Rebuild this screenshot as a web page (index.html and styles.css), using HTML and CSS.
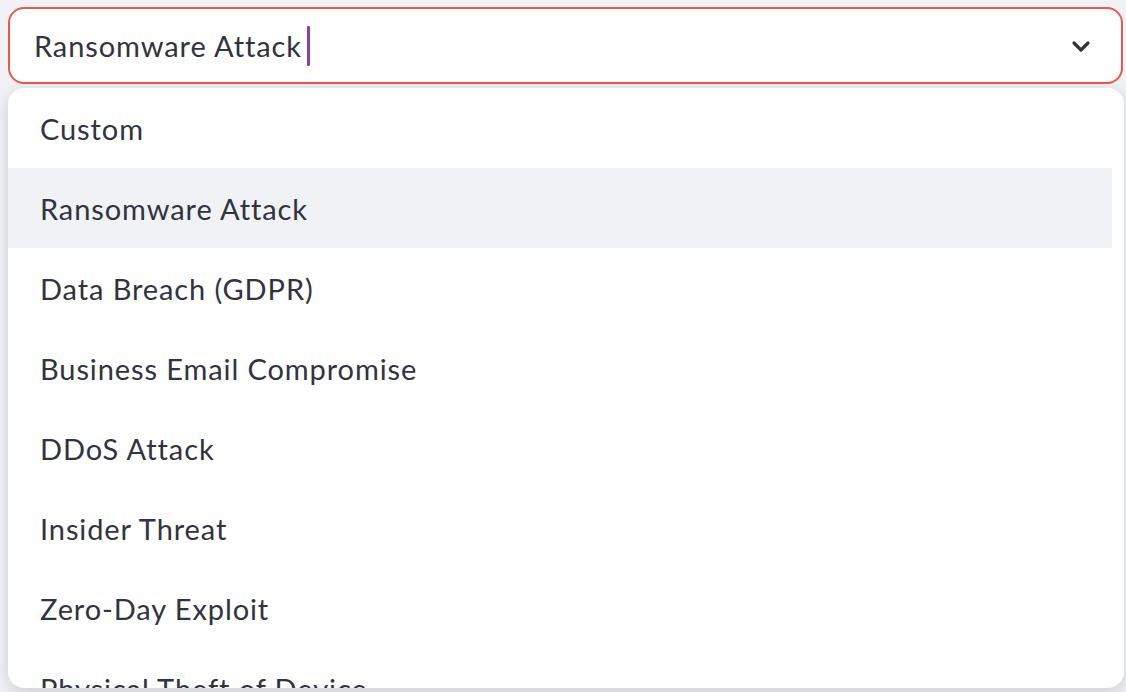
FILE: index.html
```html
<!DOCTYPE html>
<html>
<head>
<meta charset="utf-8">
<link rel="stylesheet" href="styles.css">
</head>
<body>
<div class="page">
  <div class="select">
    <div class="value">Ransomware Attack<span class="caret"></span></div>
    <svg class="chevron" width="24" height="24" viewBox="0 0 24 24"><path d="M5 9 L12 16 L19 9" fill="none" stroke="#31333f" stroke-width="3.2" stroke-linecap="round" stroke-linejoin="round"/></svg>
  </div>
  <div class="menu">
    <ul class="list">
      <li class="item">Custom</li>
      <li class="item active">Ransomware Attack</li>
      <li class="item">Data Breach (GDPR)</li>
      <li class="item">Business Email Compromise</li>
      <li class="item">DDoS Attack</li>
      <li class="item">Insider Threat</li>
      <li class="item">Zero-Day Exploit</li>
      <li class="item">Physical Theft of Device</li>
    </ul>
  </div>
</div>
</body>
</html>
```
FILE: styles.css
```css
html, body {
  margin: 0;
  padding: 0;
  background: #f0f2f6;
  height: 692px;
  overflow: hidden;
}
.page {
  padding: 7px 3px 0 8px;
  font-family: Lato, "Noto Sans", sans-serif;
  font-size: 29px;
  letter-spacing: 0.9px;
  color: #31333f;
}
.select {
  box-sizing: border-box;
  height: 77px;
  background: #fff;
  border: 2px solid #ef5550;
  border-radius: 16px;
  display: flex;
  align-items: center;
  padding: 0 28px 0 24px;
}
.value {
  flex: 1;
  display: flex;
  align-items: center;
}
.caret {
  display: inline-block;
  width: 3px;
  height: 40px;
  background: #8c3f9c;
  border-radius: 1px;
  margin-left: 5px;
}
.chevron {
  display: block;
}
.menu {
  margin-top: 4px;
  margin-right: -1px;
  height: 600px;
  background: #fff;
  border-radius: 16px;
  box-shadow: 0 4px 16px rgba(0,0,0,0.16);
  overflow: hidden;
}
.list {
  list-style: none;
  margin: 0;
  padding: 0 12px 0 0;
}
.item {
  height: 80px;
  display: flex;
  align-items: center;
  padding-left: 32px;
}
.item.active {
  background: #f0f2f6;
}
```
